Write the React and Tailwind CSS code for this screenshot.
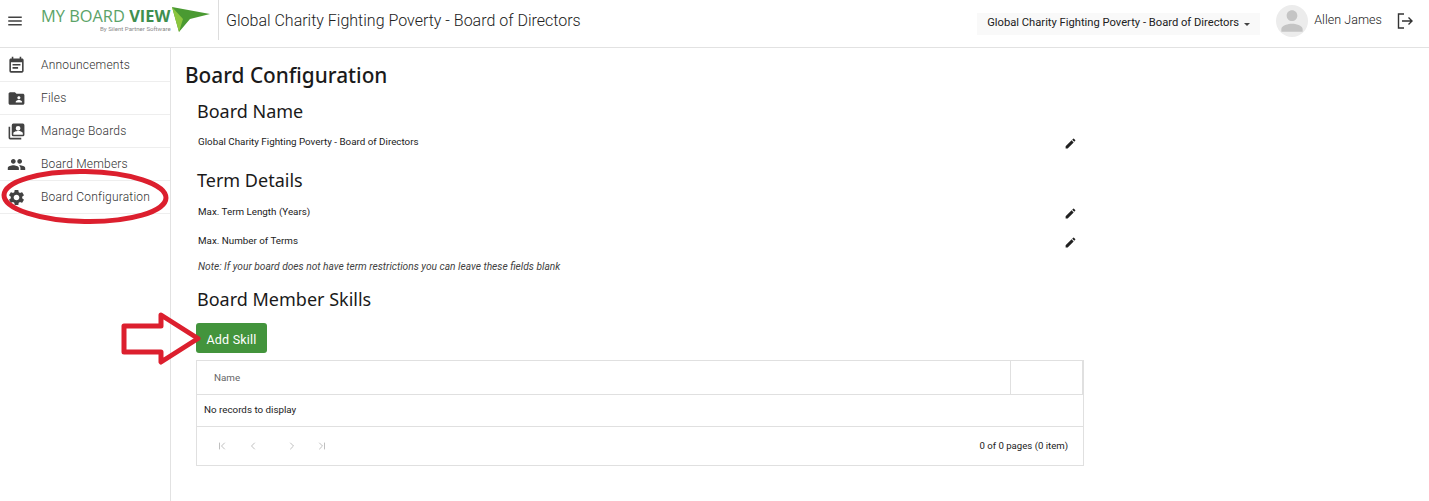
import React from 'react';
import { MdMenu, MdEventNote, MdFolderShared, MdPeople, MdSettings, MdEdit, MdPerson } from 'react-icons/md';
import { ChevronFirst, ChevronLast, ChevronLeft, ChevronRight } from 'lucide-react';

const ManageIcon = ({ className }) => (
  <svg viewBox="0 0 24 24" className={className} fill="currentColor">
    <path d="M2 6h2v14h14v2H4a2 2 0 0 1-2-2V6z" />
    <path d="M8 2h12a2 2 0 0 1 2 2v12a2 2 0 0 1-2 2H8a2 2 0 0 1-2-2V4a2 2 0 0 1 2-2zm6 3a3 3 0 1 0 0 6 3 3 0 0 0 0-6zm-6 11h12v-1.5c0-2-4-3-6-3s-6 1-6 3V16z" fillRule="evenodd" />
  </svg>
);

const menuItems = [
  { label: 'Announcements', icon: MdEventNote },
  { label: 'Files', icon: MdFolderShared },
  { label: 'Manage Boards', icon: ManageIcon },
  { label: 'Board Members', icon: MdPeople },
  { label: 'Board Configuration', icon: MdSettings },
];

const Logo = () => (
  <div className="relative flex h-[47px] w-[177px] shrink-0 flex-col self-start pt-[7px]">
    <div className="whitespace-nowrap font-['Open_Sans',sans-serif] text-[16.4px] leading-[18px] text-[#5ba368]">
      MY BOARD <span className="font-bold text-[#3f8f4f]">VIEW</span>
    </div>
    <div className="ml-[59px] whitespace-nowrap font-['Roboto',sans-serif] text-[6.1px] leading-[8px] text-[#8a8a8a]">
      By Silent Partner Software
    </div>
    <svg viewBox="0 0 39 26" className="absolute left-[131px] top-[7px] h-[26px] w-[39px]">
      <path d="M0 0 L38 7 L18 12 L7 25 Z" fill="#4a9a32" />
      <path d="M0 0 L7 25 L11 12 Z" fill="#8cc63f" />
    </svg>
  </div>
);

const Header = () => (
  <header className="flex h-[48px] items-center border-b border-[#e2e2e2] bg-white pb-[6px]">
    <MdMenu className="ml-[6px] mr-[17px] h-[18px] w-[18px] shrink-0 text-[#424242]" />
    <Logo />
    <div className="h-[40px] w-px self-start bg-[#dddddd]" />
    <div className="ml-[7px] font-['Roboto',sans-serif] text-[16px] font-light text-[#212121]">
      Global Charity Fighting Poverty - Board of Directors
    </div>
    <div className="ml-auto mt-[6px] flex h-[22px] w-[283px] items-center justify-center bg-[#f9f9f9] font-['Roboto',sans-serif] text-[11.2px] text-[#212121]">
      Global Charity Fighting Poverty - Board of Directors
      <span className="ml-[5px] mt-[2px] h-0 w-0 border-x-[3px] border-t-[3px] border-x-transparent border-t-[#444444]" />
    </div>
    <div className="ml-[16px] flex h-[32px] w-[32px] items-center justify-center overflow-hidden rounded-full bg-[#ececec]">
      <MdPerson className="h-[34px] w-[34px] text-[#c4c4c4]" />
    </div>
    <div className="ml-[6px] font-['Roboto',sans-serif] text-[12.5px] font-light tracking-[0.05px] text-[#212121]">
      Allen James
    </div>
    <svg viewBox="0 0 18 18" className="ml-[14px] mr-[15px] h-[18px] w-[18px]" fill="none" stroke="#333333" strokeWidth="1.4">
      <path d="M8 2H2.500v14H8" />
      <path d="M6 9h10M12.500 5.500 16 9l-3.500 3.500" />
    </svg>
  </header>
);

const Sidebar = () => (
  <aside className="h-[453px] w-[171px] shrink-0 border-r border-[#e2e2e2] bg-white pt-[1px]">
    {menuItems.map(({ label, icon: Icon }) => (
      <div key={label} className="flex h-[33px] items-center border-b border-[#eeeeee] pl-[7px]">
        <Icon className="h-[19px] w-[19px] shrink-0 text-[#424242]" />
        <span className="ml-[15px] whitespace-nowrap font-['Roboto',sans-serif] text-[12px] font-light tracking-[0.2px] text-[#333333]">
          {label}
        </span>
      </div>
    ))}
  </aside>
);

const Field = ({ label, className }) => (
  <div className={`flex w-[888px] items-center justify-between pl-[2px] pr-[7px] ${className}`}>
    <span className="font-['Roboto',sans-serif] text-[9.8px] text-[#212121]">{label}</span>
    <MdEdit className="mt-[2px] h-[13px] w-[13px] text-[#212121]" />
  </div>
);

const SectionTitle = ({ children, className }) => (
  <h2 className={`pl-[1px] font-['Noto_Sans',sans-serif] text-[18px] leading-[24px] text-[#1a1a1a] ${className}`}>{children}</h2>
);

const Pager = () => (
  <div className="flex items-center text-[#aaaaaa]">
    <ChevronFirst className="ml-[19px] h-[12px] w-[12px]" strokeWidth={1.5} />
    <ChevronLeft className="ml-[19px] h-[12px] w-[12px]" strokeWidth={1.5} />
    <ChevronRight className="ml-[27px] h-[12px] w-[12px]" strokeWidth={1.5} />
    <ChevronLast className="ml-[18px] h-[12px] w-[12px]" strokeWidth={1.5} />
  </div>
);

const SkillsTable = () => (
  <div className="mt-[7px] w-[888px] border border-[#e0e0e0] font-['Roboto',sans-serif] text-[9.8px] text-[#212121]">
    <div className="flex h-[34px] border-b border-[#e0e0e0]">
      <div className="flex flex-1 items-center pl-[17px] pt-[1px] text-[#666666]">Name</div>
      <div className="w-[73px] border-x border-x-[#e0e0e0]" />
    </div>
    <div className="flex h-[32px] items-center border-b border-[#e0e0e0] pl-[7px]">No records to display</div>
    <div className="flex h-[38px] items-center justify-between pr-[15px]">
      <Pager />
      <span className="text-[9.6px]">0 of 0 pages (0 item)</span>
    </div>
  </div>
);

// red marks somebody drew over the screenshot
const Annotations = () => (
  <svg className="pointer-events-none absolute left-0 top-0 h-[501px] w-[1429px]" viewBox="0 0 1429 501" fill="none" stroke="#dc1f2e">
    <ellipse cx="85" cy="196.500" rx="81" ry="25" strokeWidth="5" transform="rotate(1 85 196)" />
    <path d="M124 326H161V315L198 338.500 161 362V352H124Z" strokeWidth="5" strokeLinejoin="round" />
  </svg>
);

export default function App() {
  return (
    <div className="relative h-[501px] w-[1429px] overflow-hidden bg-white">
      <Header />
      <div className="flex">
        <Sidebar />
        <main className="pl-[13px] pt-[13px]">
          <h1 className="pl-[1px] font-['Noto_Sans',sans-serif] text-[20.8px] font-medium leading-[28px] text-[#1a1a1a]">
            Board Configuration
          </h1>
          <div className="pl-[12px]">
            <SectionTitle className="mt-[10px]">Board Name</SectionTitle>
            <Field label="Global Charity Fighting Poverty - Board of Directors" className="mt-[9px] h-[20px]" />
            <SectionTitle className="mt-[16px]">Term Details</SectionTitle>
            <Field label="Max. Term Length (Years)" className="mt-[10px] h-[20px]" />
            <Field label="Max. Number of Terms" className="mt-[9px] h-[20px]" />
            <p className="mt-[10px] pl-[2px] font-['Roboto',sans-serif] text-[10.2px] italic leading-[12px] text-[#424242]">
              Note: If your board does not have term restrictions you can leave these fields blank
            </p>
            <SectionTitle className="mt-[14px]">Board Member Skills</SectionTitle>
            <button className="mt-[12px] block h-[30px] w-[71px] rounded-[3px] bg-[#43943c] pt-[4px] font-['Roboto',sans-serif] text-[12.5px] tracking-[0.2px] text-white">
              Add Skill
            </button>
            <SkillsTable />
          </div>
        </main>
      </div>
      <Annotations />
    </div>
  );
}
